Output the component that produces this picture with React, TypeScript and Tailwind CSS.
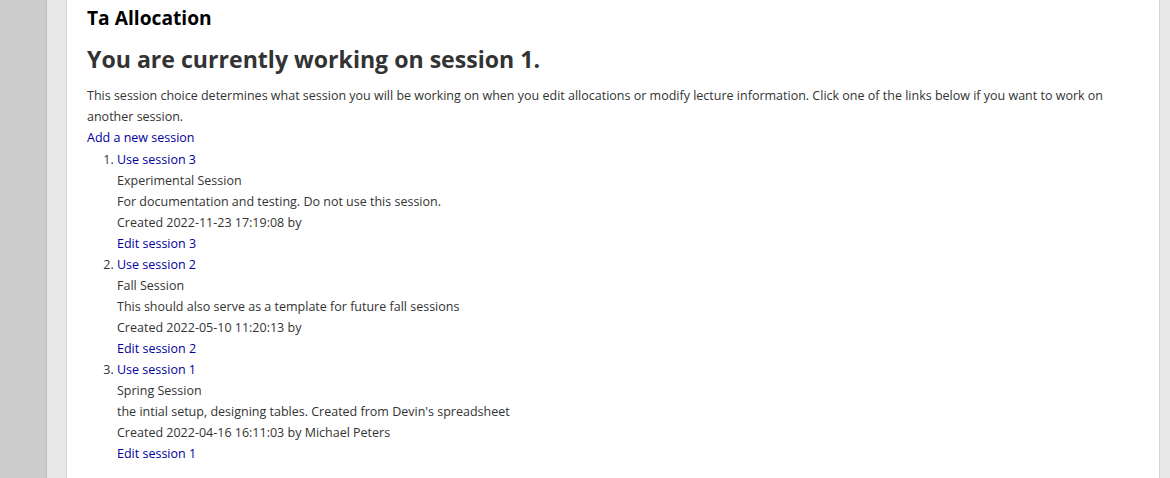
const sessions = [
  {
    id: 3,
    name: "Experimental Session",
    description: "For documentation and testing. Do not use this session.",
    created: "Created 2022-11-23 17:19:08 by",
  },
  {
    id: 2,
    name: "Fall Session",
    description: "This should also serve as a template for future fall sessions",
    created: "Created 2022-05-10 11:20:13 by",
  },
  {
    id: 1,
    name: "Spring Session",
    description: "the intial setup, designing tables. Created from Devin's spreadsheet",
    created: "Created 2022-04-16 16:11:03 by Michael Peters",
  },
];

export default function App() {
  return (
    <div
      className="flex h-[478px] w-[1170px] overflow-hidden bg-[#cccccc]"
      style={{ fontFamily: '"Open Sans", "Liberation Sans", sans-serif' }}
    >
      <div className="w-[46px] shrink-0" />
      <div className="flex min-w-0 flex-1">
        <div className="w-[21px] shrink-0 border-l border-[#bdbdbd] border-r border-r-[#d6d6d6] bg-[#e8e8e8]" />
        <main className="min-w-0 flex-1 bg-white px-5 text-[12.5px] leading-[21px] text-[#333333]">
          <h1 className="mt-[6px] text-[19.2px] leading-[24px] font-bold text-black">Ta Allocation</h1>
          <h2 className="mt-[11px] text-[23.1px] leading-[36px] font-bold text-[#333333]">
            You are currently working on session 1.
          </h2>
          <p className="mt-[8px]">
            This session choice determines what session you will be working on when you edit allocations or
            modify lecture information. Click one of the links below if you want to work on another session.
          </p>
          <a href="#" className="text-[#00009c]">
            Add a new session
          </a>
          <ol className="mt-[1px] list-decimal pl-[30px]">
            {sessions.map((s) => (
              <li key={s.id}>
                <a href="#" className="text-[#00009c]">
                  Use session {s.id}
                </a>
                <div>{s.name}</div>
                <div>{s.description}</div>
                <div>{s.created}</div>
                <a href="#" className="block text-[#00009c]">
                  Edit session {s.id}
                </a>
              </li>
            ))}
          </ol>
        </main>
        <div className="w-[11px] shrink-0 border-l border-[#d6d6d6] bg-[#e8e8e8]" />
      </div>
    </div>
  );
}
